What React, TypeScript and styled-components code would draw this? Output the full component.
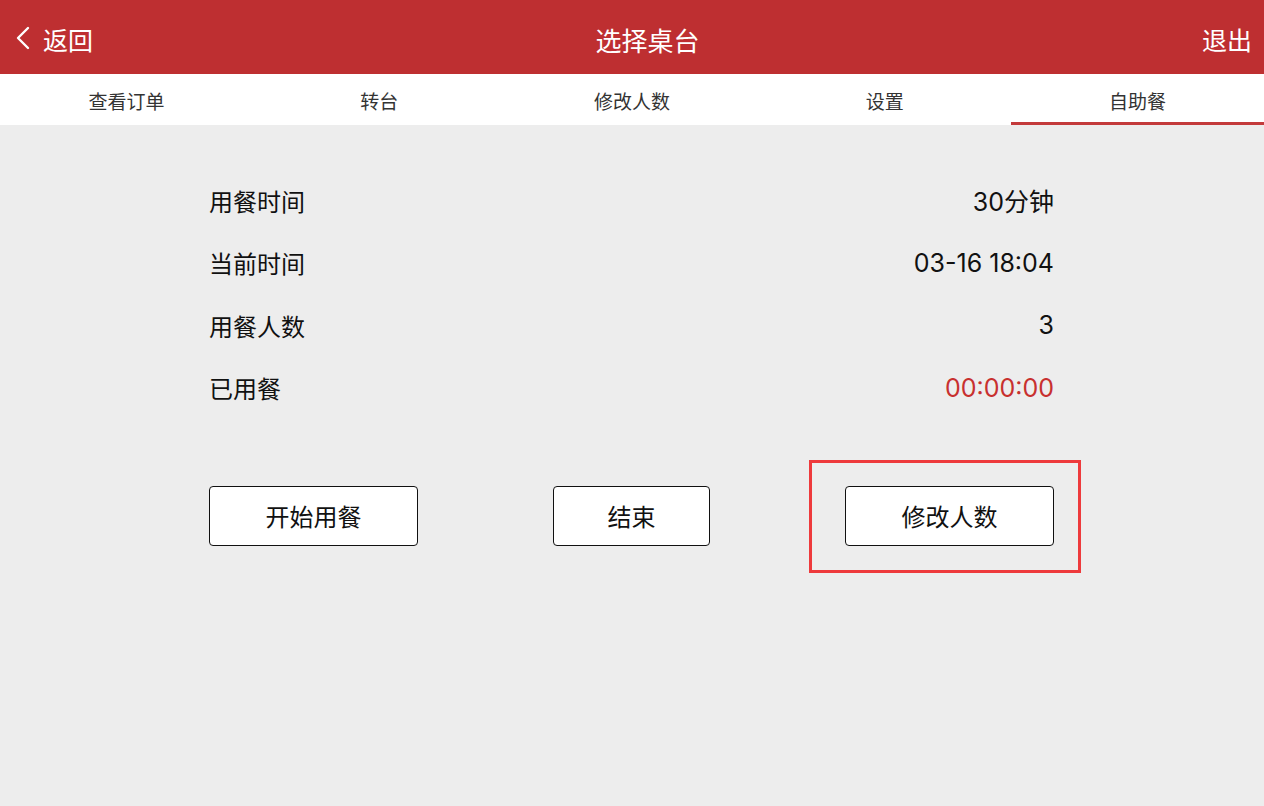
import React from "react";
import styled, { createGlobalStyle } from "styled-components";

const GlobalStyle = createGlobalStyle`
  html, body {
    margin: 0;
    padding: 0;
    background: #ededed;
  }

  body {
    font-family: "Liberation Sans", "Noto Sans CJK SC", sans-serif;
    -webkit-font-smoothing: antialiased;
  }

  * {
    box-sizing: border-box;
  }
`;

const tabs = ["查看订单", "转台", "修改人数", "设置", "自助餐"];

const rows = [
  { label: "用餐时间", value: "30分钟" },
  { label: "当前时间", value: "03-16 18:04" },
  { label: "用餐人数", value: "3" },
  { label: "已用餐", value: "00:00:00", accent: true },
];

const BackIcon = () => (
  <svg width="18" height="24" viewBox="0 0 18 24" fill="none">
    <path
      d="M14 2 L4 12 L14 22"
      stroke="#fff"
      strokeWidth="2.4"
      strokeLinecap="round"
      strokeLinejoin="round"
    />
  </svg>
);

export default function App() {
  return (
    <Page>
      <GlobalStyle />
      <Header>
        <BackButton>
          <BackIcon />
          <span>返回</span>
        </BackButton>
        <Title>选择桌台</Title>
        <ExitButton>退出</ExitButton>
      </Header>

      <TabBar>
        {tabs.map((t, i) => (
          <Tab key={t} active={i === tabs.length - 1}>
            {t}
          </Tab>
        ))}
      </TabBar>

      <Content>
        <InfoList>
          {rows.map((r) => (
            <InfoRow key={r.label}>
              <Label>{r.label}</Label>
              <Value accent={r.accent}>{r.value}</Value>
            </InfoRow>
          ))}
        </InfoList>

        <Actions>
          <ActionButton width={209}>开始用餐</ActionButton>
          <ActionButton width={157}>结束</ActionButton>
          <Highlight>
            <ActionButton width={209}>修改人数</ActionButton>
          </Highlight>
        </Actions>
      </Content>
    </Page>
  );
}

const Page = styled.div`
  min-height: 806px;
  background: #ededed;
`;

const Header = styled.header`
  height: 74px;
  background: #be2f31;
  color: #fff;
  display: flex;
  align-items: center;
  padding: 4px 12px 0;
  font-size: 25px;
  font-family: "Noto Sans CJK SC", sans-serif;
`;

const BackButton = styled.div`
  display: flex;
  align-items: center;
  gap: 11px;
  padding-left: 2px;

  svg {
    margin-top: -2px;
  }
`;

const Title = styled.h1`
  flex: 1;
  margin: 0;
  text-align: center;
  font-size: 26px;
  font-weight: 400;
`;

const ExitButton = styled.div``;

const TabBar = styled.nav`
  display: grid;
  grid-template-columns: repeat(5, 1fr);
  height: 51px;
  background: #fff;
`;

const Tab = styled.div<{ active?: boolean }>`
  display: flex;
  align-items: center;
  justify-content: center;
  padding-top: 4px;
  font-size: 19px;
  color: #333;
  font-family: "Noto Sans CJK SC", sans-serif;
  border-bottom: 3px solid ${(p) => (p.active ? "#c33a3b" : "transparent")};
`;

const Content = styled.main`
  width: 846px;
  margin: 0 auto;
  padding: 44px 1px 0 0;
`;

const InfoList = styled.div`
  display: flex;
  flex-direction: column;
`;

const InfoRow = styled.div`
  height: 62.5px;
  display: flex;
  align-items: center;
  justify-content: space-between;
  font-size: 24px;
`;

const Label = styled.span`
  font-family: "Noto Sans CJK SC", sans-serif;
  color: #111;
`;

const Value = styled.span<{ accent?: boolean }>`
  font-family: "Inter", "Noto Sans CJK SC", sans-serif;
  font-size: 25px;
  color: ${(p) => (p.accent ? "#c8302f" : "#111")};
`;

const Actions = styled.div`
  display: flex;
  justify-content: space-between;
  align-items: center;
  margin-top: 67px;
`;

const ActionButton = styled.button<{ width: number }>`
  width: ${(p) => p.width}px;
  height: 60px;
  background: #fff;
  border: 1px solid #111;
  border-radius: 4px;
  font-size: 24px;
  color: #111;
  font-family: "Noto Sans CJK SC", sans-serif;
  padding: 0 0 2px;
  display: flex;
  align-items: center;
  justify-content: center;
`;

const Highlight = styled.div`
  position: relative;

  &::after {
    content: "";
    position: absolute;
    top: -26px;
    bottom: -27px;
    left: -36px;
    right: -27px;
    border: 3px solid #ee3a3c;
    pointer-events: none;
  }
`;
